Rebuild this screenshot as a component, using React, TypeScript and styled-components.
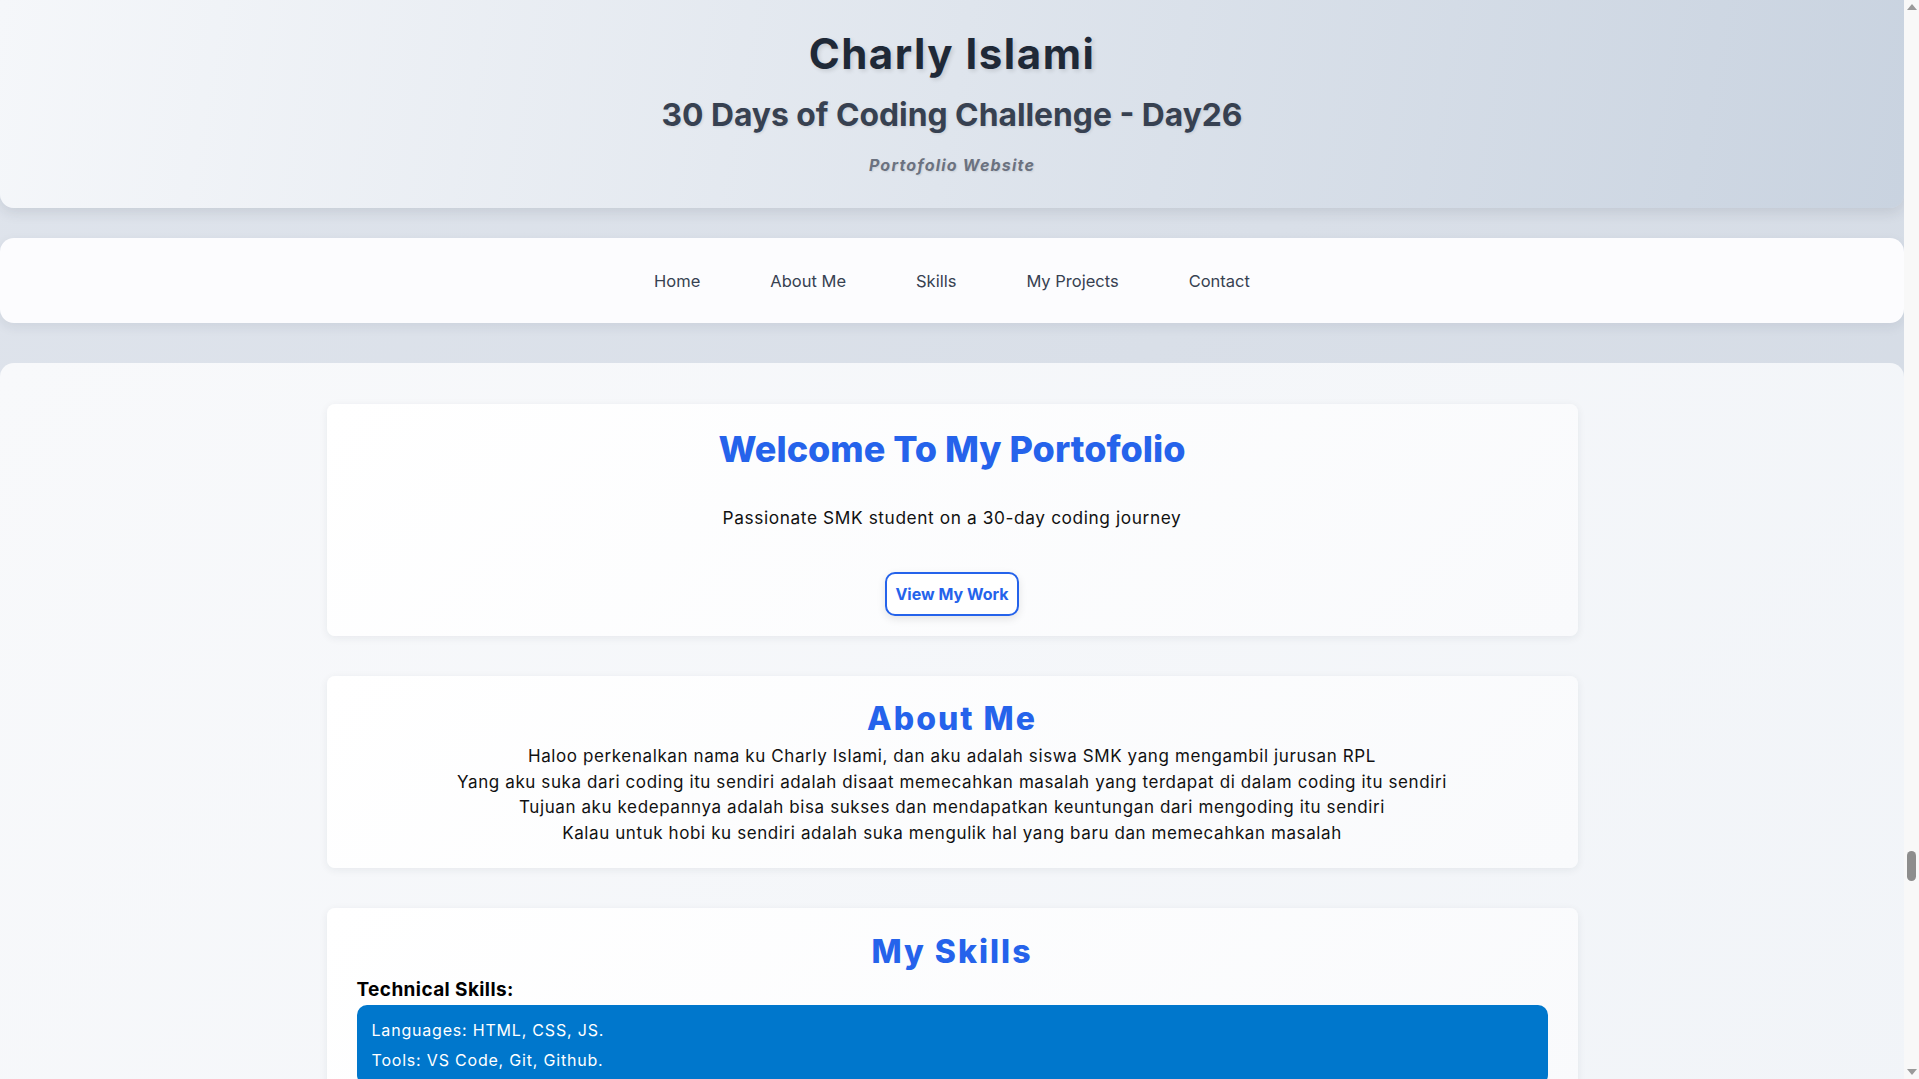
import React from "react";
import styled, { createGlobalStyle } from "styled-components";

const GlobalStyle = createGlobalStyle`
  * { box-sizing: border-box; }
  html, body { margin: 0; padding: 0; }
  body {
    font-family: "Inter", "Open Sans", sans-serif;
    background: linear-gradient(135deg, #dfe4ec 0%, #d3dae4 100%);
    color: #111827;
  }
`;

const Root = styled.div`
  display: flex;
  height: 100vh;
  overflow: hidden;
`;

const Page = styled.div`
  flex: 1;
  min-width: 0;
  overflow: hidden;
`;

const ScrollTrack = styled.div`
  position: relative;
  flex: none;
  width: 15px;
  display: flex;
  flex-direction: column;
  justify-content: space-between;
  align-items: center;
  padding: 4px 0 4px;
  background: #f8f8f8;
`;

const Arrow = styled.span<{ $down?: boolean }>`
  width: 0;
  height: 0;
  border-left: 5px solid transparent;
  border-right: 5px solid transparent;
  ${(p) =>
    p.$down
      ? "border-top: 6px solid #9a9a9a;"
      : "border-bottom: 6px solid #9a9a9a;"}
`;

const Thumb = styled.span`
  position: absolute;
  top: 851px;
  left: 3px;
  width: 9px;
  height: 30px;
  border-radius: 5px;
  background: #8d8d8d;
`;

const Header = styled.header`
  display: flex;
  flex-direction: column;
  align-items: center;
  padding: 30px 20px 31px;
  background: linear-gradient(100deg, #f5f7fa 0%, #dfe5ed 50%, #c9d3e0 100%);
  border-radius: 0 0 14px 14px;
  box-shadow: 0 4px 14px rgba(30, 41, 59, 0.12);
  text-align: center;
`;

const Name = styled.h1`
  margin: 0;
  font-size: 42px;
  line-height: 48px;
  font-weight: 700;
  letter-spacing: 1.5px;
  color: #1f2937;
  text-shadow: 2px 2px 4px rgba(0, 0, 0, 0.12);
`;

const Challenge = styled.h2`
  margin: 18px 0 0;
  font-size: 31.8px;
  line-height: 38px;
  font-weight: 700;
  color: #374151;
  text-shadow: 1px 1px 3px rgba(0, 0, 0, 0.1);
`;

const Tagline = styled.p`
  margin: 19px 0 0;
  font-size: 16px;
  line-height: 24px;
  font-weight: 700;
  font-style: italic;
  letter-spacing: 1.2px;
  color: #6b7280;
  text-shadow: 1px 1px 2px rgba(0, 0, 0, 0.1);
`;

const Nav = styled.nav`
  margin-top: 30px;
  height: 85px;
  display: flex;
  align-items: center;
  justify-content: center;
  gap: 70px;
  background: #fcfcfe;
  border-radius: 14px;
  box-shadow: 0 4px 12px rgba(30, 41, 59, 0.08);
`;

const NavLink = styled.a`
  font-size: 16.5px;
  color: #374151;
  text-decoration: none;
  cursor: pointer;
`;

const Main = styled.main`
  margin-top: 40px;
  padding: 41px 0 60px;
  display: flex;
  flex-direction: column;
  align-items: center;
  gap: 40px;
  background: linear-gradient(135deg, #f8f9fb 0%, #f1f4f8 100%);
  border-radius: 14px 14px 0 0;
`;

const Card = styled.section<{ $pt: number; $pb: number }>`
  width: 1251px;
  max-width: 100%;
  padding: ${(p) => p.$pt}px 30px ${(p) => p.$pb}px;
  display: flex;
  flex-direction: column;
  align-items: center;
  background: linear-gradient(135deg, #ffffff 0%, #f9fafc 100%);
  border-radius: 8px;
  box-shadow: 0 2px 8px rgba(30, 41, 59, 0.07);
`;

const HeroTitle = styled.h2`
  margin: 0;
  font-size: 36px;
  line-height: 48px;
  font-weight: 800;
  color: #2563eb;
`;

const HeroText = styled.p`
  margin: 31px 0 0;
  font-size: 17.3px;
  line-height: 27px;
  letter-spacing: 0.6px;
  color: #111111;
`;

const WorkButton = styled.button`
  margin-top: 41px;
  height: 44px;
  padding: 0 8px;
  font-family: inherit;
  font-size: 16px;
  font-weight: 700;
  color: #2563eb;
  background: #ffffff;
  border: 2px solid #2563eb;
  border-radius: 10px;
  box-shadow: 0 3px 8px rgba(0, 0, 0, 0.1);
  cursor: pointer;
`;

const SectionTitle = styled.h2`
  margin: 0;
  font-size: 32px;
  line-height: 40px;
  font-weight: 800;
  letter-spacing: 2px;
  color: #2563eb;
`;

const AboutText = styled.p`
  margin: 5px 0 0;
  font-size: 17px;
  line-height: 25.6px;
  letter-spacing: 0.6px;
  text-align: center;
  color: #111111;
`;

const SkillLabel = styled.h3`
  align-self: stretch;
  margin: 6px 0 3px;
  font-size: 19px;
  line-height: 24px;
  font-weight: 700;
  letter-spacing: 0.4px;
  color: #000000;
`;

const SkillBox = styled.div`
  align-self: stretch;
  padding: 10px 15px;
  background: #0077cc;
  border-radius: 10px;
  color: #ffffff;
`;

const SkillLine = styled.p`
  margin: 0;
  font-size: 16px;
  line-height: 30px;
  letter-spacing: 0.8px;
`;

const links = ["Home", "About Me", "Skills", "My Projects", "Contact"];

export default function App() {
  return (
    <>
      <GlobalStyle />
      <Root>
        <Page>
          <Header>
            <Name>Charly Islami</Name>
            <Challenge>30 Days of Coding Challenge - Day26</Challenge>
            <Tagline>Portofolio Website</Tagline>
          </Header>
          <Nav>
            {links.map((l) => (
              <NavLink key={l}>{l}</NavLink>
            ))}
          </Nav>
          <Main>
            <Card $pt={21} $pb={20}>
              <HeroTitle>Welcome To My Portofolio</HeroTitle>
              <HeroText>Passionate SMK student on a 30-day coding journey</HeroText>
              <WorkButton>View My Work</WorkButton>
            </Card>
            <Card $pt={23} $pb={22}>
              <SectionTitle>About Me</SectionTitle>
              <AboutText>
                Haloo perkenalkan nama ku Charly Islami, dan aku adalah siswa SMK yang mengambil jurusan RPL
                <br />
                Yang aku suka dari coding itu sendiri adalah disaat memecahkan masalah yang terdapat di dalam coding itu sendiri
                <br />
                Tujuan aku kedepannya adalah bisa sukses dan mendapatkan keuntungan dari mengoding itu sendiri
                <br />
                Kalau untuk hobi ku sendiri adalah suka mengulik hal yang baru dan memecahkan masalah
              </AboutText>
            </Card>
            <Card $pt={24} $pb={30}>
              <SectionTitle>My Skills</SectionTitle>
              <SkillLabel>Technical Skills:</SkillLabel>
              <SkillBox>
                <SkillLine>Languages: HTML, CSS, JS.</SkillLine>
                <SkillLine>Tools: VS Code, Git, Github.</SkillLine>
              </SkillBox>
            </Card>
          </Main>
        </Page>
        <ScrollTrack>
          <Arrow />
          <Thumb />
          <Arrow $down />
        </ScrollTrack>
      </Root>
    </>
  );
}
